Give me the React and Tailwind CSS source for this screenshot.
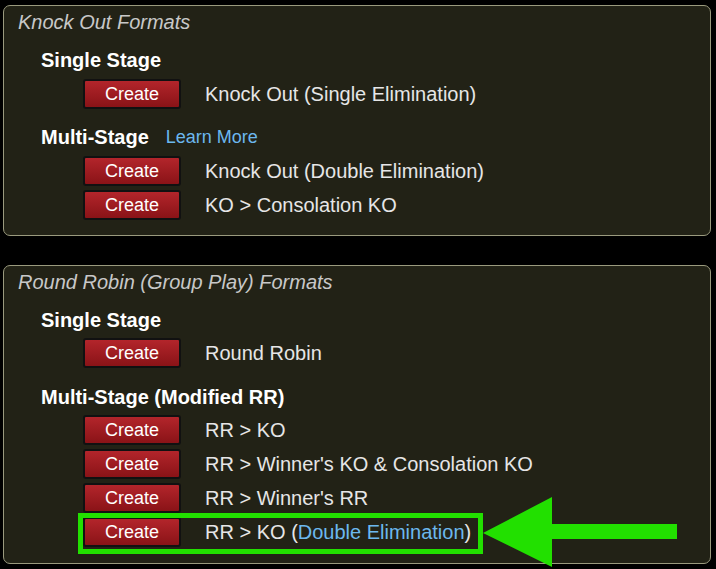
import React from "react";

function Btn() {
  return (
    <button className="w-[98px] h-[30px] rounded-[3px] border-2 border-[#111] bg-gradient-to-b from-[#b3252b] to-[#8a1317] text-white text-[18px] leading-none flex items-center justify-center shrink-0">
      Create
    </button>
  );
}

function Row({ children }) {
  return (
    <div className="flex items-center h-[30px] pl-[79px]">
      <Btn />
      <div className="ml-[24px] text-[20px] text-[#e6e6e6] leading-none whitespace-nowrap">{children}</div>
    </div>
  );
}

function Heading({ children, extra }) {
  return (
    <div className="flex items-center h-[24px] pl-[37px]">
      <span className="text-[20px] font-bold text-white leading-none">{children}</span>
      {extra}
    </div>
  );
}

function Panel({ title, children, className }) {
  return (
    <div className={"mx-[3px] mr-[5px] border border-[#9a9a7e] rounded-[7px] bg-[#222216] pt-[4px] " + className}>
      <div className="h-[24px] flex items-center pl-[14px] italic text-[20px] text-[#c8c8c8] leading-none">{title}</div>
      {children}
    </div>
  );
}

export default function App() {
  return (
    <div className="relative w-[716px] h-[569px] bg-black overflow-hidden" style={{ fontFamily: '"Liberation Sans", Arial, sans-serif' }}>
      <div className="pt-[5px]">
        <Panel title="Knock Out Formats" className="pb-[15px]">
          <div className="mt-[14px]"><Heading>Single Stage</Heading></div>
          <div className="mt-[7px]"><Row>Knock Out (Single Elimination)</Row></div>
          <div className="mt-[16px]">
            <Heading extra={<span className="ml-[17px] text-[18px] text-[#6cb8ee] leading-none">Learn More</span>}>Multi-Stage</Heading>
          </div>
          <div className="mt-[7px] flex flex-col gap-[4px]">
            <Row>Knock Out (Double Elimination)</Row>
            <Row>KO &gt; Consolation KO</Row>
          </div>
        </Panel>
        <Panel title="Round Robin (Group Play) Formats" className="mt-[29px] pb-[16px]">
          <div className="mt-[14px]"><Heading>Single Stage</Heading></div>
          <div className="mt-[6px]"><Row>Round Robin</Row></div>
          <div className="mt-[17px]"><Heading>Multi-Stage (Modified RR)</Heading></div>
          <div className="mt-[6px] flex flex-col gap-[4px]">
            <Row>RR &gt; KO</Row>
            <Row>RR &gt; Winner's KO &amp; Consolation KO</Row>
            <Row>RR &gt; Winner's RR</Row>
            <Row>
              RR &gt; KO (<span className="text-[#6cb8ee]">Double Elimination</span>)
            </Row>
          </div>
        </Panel>
      </div>
      <div className="absolute left-[78px] top-[513px] w-[405px] h-[41px] border-[5px] border-[#22e000]" />
      <svg className="absolute left-0 top-0" width="716" height="569" viewBox="0 0 716 569">
        <polygon points="483,533 552,497 552,524 677,524 677,539 552,539 552,567" fill="#22e000" />
      </svg>
    </div>
  );
}
